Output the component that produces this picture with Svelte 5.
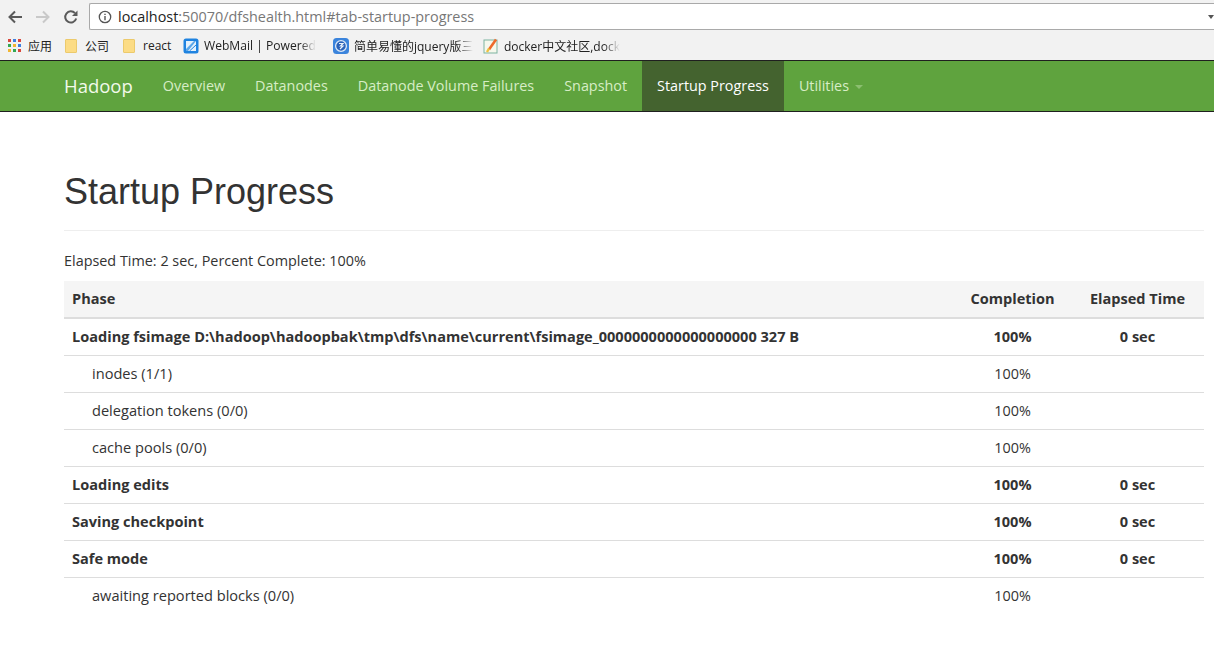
<script>
    const tabs = ["Overview", "Datanodes", "Datanode Volume Failures", "Snapshot", "Startup Progress"]
    const rows = [
        { name: "Loading fsimage D:\\hadoop\\hadoopbak\\tmp\\dfs\\name\\current\\fsimage_0000000000000000000 327 B", main: true },
        { name: "inodes (1/1)" },
        { name: "delegation tokens (0/0)" },
        { name: "cache pools (0/0)" },
        { name: "Loading edits", main: true },
        { name: "Saving checkpoint", main: true },
        { name: "Safe mode", main: true },
        { name: "awaiting reported blocks (0/0)" }
    ]
</script>

<div class="browser">
    <div class="toolbar">
        <svg class="nav-icon" width="16" height="16" viewBox="0 0 16 16"><path d="M15 8H3M8 2.5 2.5 8 8 13.5" fill="none" stroke="#5a5a5a" stroke-width="2"/></svg>
        <svg class="nav-icon" width="16" height="16" viewBox="0 0 16 16"><path d="M1 8h12M8 2.5 13.5 8 8 13.5" fill="none" stroke="#c9c9c9" stroke-width="2"/></svg>
        <svg class="nav-icon" width="16" height="16" viewBox="0 0 16 16"><path d="M13.2 9.5A5.6 5.6 0 1 1 12 4.2" fill="none" stroke="#5a5a5a" stroke-width="2"/><path d="M14.5 1.5v5.6H9z" fill="#5a5a5a"/></svg>
        <div class="url">
            <svg width="14" height="14" viewBox="0 0 14 14"><circle cx="7" cy="7" r="5.7" fill="none" stroke="#555" stroke-width="1.3"/><path d="M7 6v4.2M7 3.8v1.3" stroke="#555" stroke-width="1.4"/></svg>
            <span class="host">localhost<span class="rest">:50070/dfshealth.html#tab-startup-progress</span></span>
            <span class="caret"></span>
        </div>
    </div>
    <div class="bookmarks">
        <div class="mark apps">
            <svg width="14" height="14" viewBox="0 0 14 14">
                <rect x="0" y="0" width="3" height="3" fill="#d9473c"/><rect x="5" y="0" width="3" height="3" fill="#3f7fe0"/><rect x="10" y="0" width="3" height="3" fill="#d9473c"/>
                <rect x="0" y="5" width="3" height="3" fill="#34a853"/><rect x="5" y="5" width="3" height="3" fill="#f2b632"/><rect x="10" y="5" width="3" height="3" fill="#3f7fe0"/>
                <rect x="0" y="10" width="3" height="3" fill="#f2b632"/><rect x="5" y="10" width="3" height="3" fill="#34a853"/><rect x="10" y="10" width="3" height="3" fill="#d9473c"/>
            </svg>
            <span>应用</span>
        </div>
        <div class="mark folder1"><span class="folder"></span><span>公司</span></div>
        <div class="mark folder2"><span class="folder"></span><span>react</span></div>
        <div class="mark mail">
            <svg width="16" height="16" viewBox="0 0 16 16"><rect x="0.5" y="0.5" width="15" height="15" rx="2.5" fill="#1f83e0"/><path d="M3 3h10v10H3z" fill="#e4f1fc"/><path d="M3 11 11 3h2L5 13H3z" fill="#5aa7ea"/><path d="M6.5 13 13 7" stroke="#1f83e0" stroke-width="1"/></svg>
            <span class="fade w1">WebMail | Powered</span>
        </div>
        <div class="mark jq">
            <svg width="16" height="16" viewBox="0 0 16 16"><rect width="16" height="16" rx="3.5" fill="#3b84dc"/><circle cx="8" cy="8" r="5.4" fill="#2a62b8" stroke="#dce9f8" stroke-width="1.3"/><path d="M6 5.5h4L7.5 8H10L7 11" fill="none" stroke="#eaf2fb" stroke-width="1.2"/></svg>
            <span class="fade">简单易懂的jquery版三</span>
        </div>
        <div class="mark docker">
            <svg width="16" height="16" viewBox="0 0 16 16"><rect x="1" y="2" width="13" height="13" fill="#f6f8ec" stroke="#7db3a0"/><path d="M6 11.5 13 1.5" stroke="#ee6a2c" stroke-width="2.6"/><path d="M4 14l2-3.5" stroke="#efc23e" stroke-width="2.4"/></svg>
            <span class="fade">docker中文社区,dock</span>
        </div>
    </div>
</div>

<nav class="navbar">
    <div class="brand">Hadoop</div>
    {#each tabs as tab}
        <div class="tab" class:active={tab === "Startup Progress"}>{tab}</div>
    {/each}
    <div class="tab">Utilities<span class="drop"></span></div>
</nav>

<main>
    <h1>Startup Progress</h1>
    <p>Elapsed Time: 2 sec, Percent Complete: 100%</p>
    <table>
        <thead>
            <tr>
                <th>Phase</th>
                <th class="c1">Completion</th>
                <th class="c2">Elapsed Time</th>
            </tr>
        </thead>
        <tbody>
            {#each rows as row}
                <tr class:main={row.main}>
                    <td class:sub={!row.main}>{row.name}</td>
                    <td class="c1">100%</td>
                    <td class="c2">{row.main ? "0 sec" : ""}</td>
                </tr>
            {/each}
        </tbody>
    </table>
</main>

<style>
    :global(body) {
        font-family: "Open Sans", "Noto Sans CJK SC", sans-serif;
        font-size: 14.4px;
        color: #333;
        background: #fff;
    }
    .browser {
        height: 60px;
        background: #f2f2f2;
        overflow: hidden;
    }
    .toolbar {
        height: 31px;
        display: flex;
        align-items: center;
        padding-left: 7px;
        gap: 12px;
        box-sizing: border-box;
        padding-top: 2px;
    }
    .nav-icon {
        flex: none;
    }
    .url {
        flex: 1;
        height: 27px;
        margin-left: -2px;
        background: #fff;
        border: 1px solid #a9a9a9;
        border-right: none;
        border-radius: 2px 0 0 2px;
        box-sizing: border-box;
        display: flex;
        align-items: center;
        gap: 6px;
        padding-left: 8px;
        font-size: 14.4px;
    }
    .host {
        color: #222;
    }
    .rest {
        color: #777;
    }
    .caret {
        margin-left: auto;
        border-left: 3px solid transparent;
        border-right: 3px solid transparent;
        border-top: 4px solid #555;
    }
    .bookmarks {
        height: 29px;
        display: flex;
        align-items: center;
        font-size: 12px;
        color: #222;
    }
    .mark {
        display: flex;
        align-items: center;
        gap: 5px;
        flex: none;
    }
    .apps { margin-left: 8px; width: 57px; gap: 6px; }
    .folder1 { width: 58px; gap: 8px; }
    .folder2 { width: 60px; gap: 8px; }
    .mail { width: 150px; }
    .jq { width: 150px; }
    .folder {
        width: 12px;
        height: 14px;
        background: #fcdc85;
        border: 1px solid #ecca6c;
        box-sizing: border-box;
        border-radius: 1px;
    }
    .fade {
        white-space: nowrap;
        -webkit-mask-image: linear-gradient(to right, #000 86%, transparent);
        mask-image: linear-gradient(to right, #000 86%, transparent);
    }
    .w1 { font-size: 12.1px; }
    .navbar {
        height: 52px;
        box-sizing: border-box;
        background: #5fa33e;
        border-top: 1px solid #1f1f1f;
        border-bottom: 1px solid #1f1f1f;
        display: flex;
        padding-left: 49px;
        color: #d7edc6;
    }
    .brand {
        padding: 0 15px;
        line-height: 50px;
        font-size: 18.5px;
        color: #f2f9ea;
    }
    .tab {
        padding: 0 15px;
        line-height: 50px;
        font-size: 14.37px;
    }
    .tab.active {
        background: #44632f;
        color: #fff;
    }
    .drop {
        display: inline-block;
        margin-left: 6px;
        vertical-align: middle;
        border-left: 4px solid transparent;
        border-right: 4px solid transparent;
        border-top: 4px solid #8cbf70;
    }
    main {
        padding: 0 10px 0 64px;
    }
    h1 {
        margin: 0;
        padding: 60px 0 18px;
        font-family: "Liberation Sans", Arial, sans-serif;
        font-size: 36px;
        font-weight: 400;
        line-height: 40px;
        color: #333;
        border-bottom: 1px solid #eee;
    }
    p {
        margin: 20px 0 10px;
        line-height: 20px;
    }
    table {
        width: 100%;
        border-collapse: collapse;
        table-layout: fixed;
    }
    th, td {
        padding: 8px;
        line-height: 20px;
        text-align: left;
        border-top: 1px solid #ddd;
        font-weight: 400;
    }
    thead th {
        background: #f5f5f5;
        font-weight: 700;
        font-size: 14.55px;
        padding-top: 7px;
        padding-bottom: 9px;
        border-top: none;
        border-bottom: 2px solid #ddd;
    }
    tr.main td {
        font-weight: 700;
        font-size: 14.55px;
        padding-top: 7px;
        padding-bottom: 9px;
    }
    td.sub {
        padding: 7px 8px 9px 28px;
        font-size: 14.6px;
    }
    .c1, .c2 {
        text-align: center;
    }
    thead th.c1, thead th.c2 {
        text-align: center;
    }
    .c1 {
        width: 117px;
        box-sizing: border-box;
    }
    .c2 {
        width: 133px;
        box-sizing: border-box;
    }
</style>
